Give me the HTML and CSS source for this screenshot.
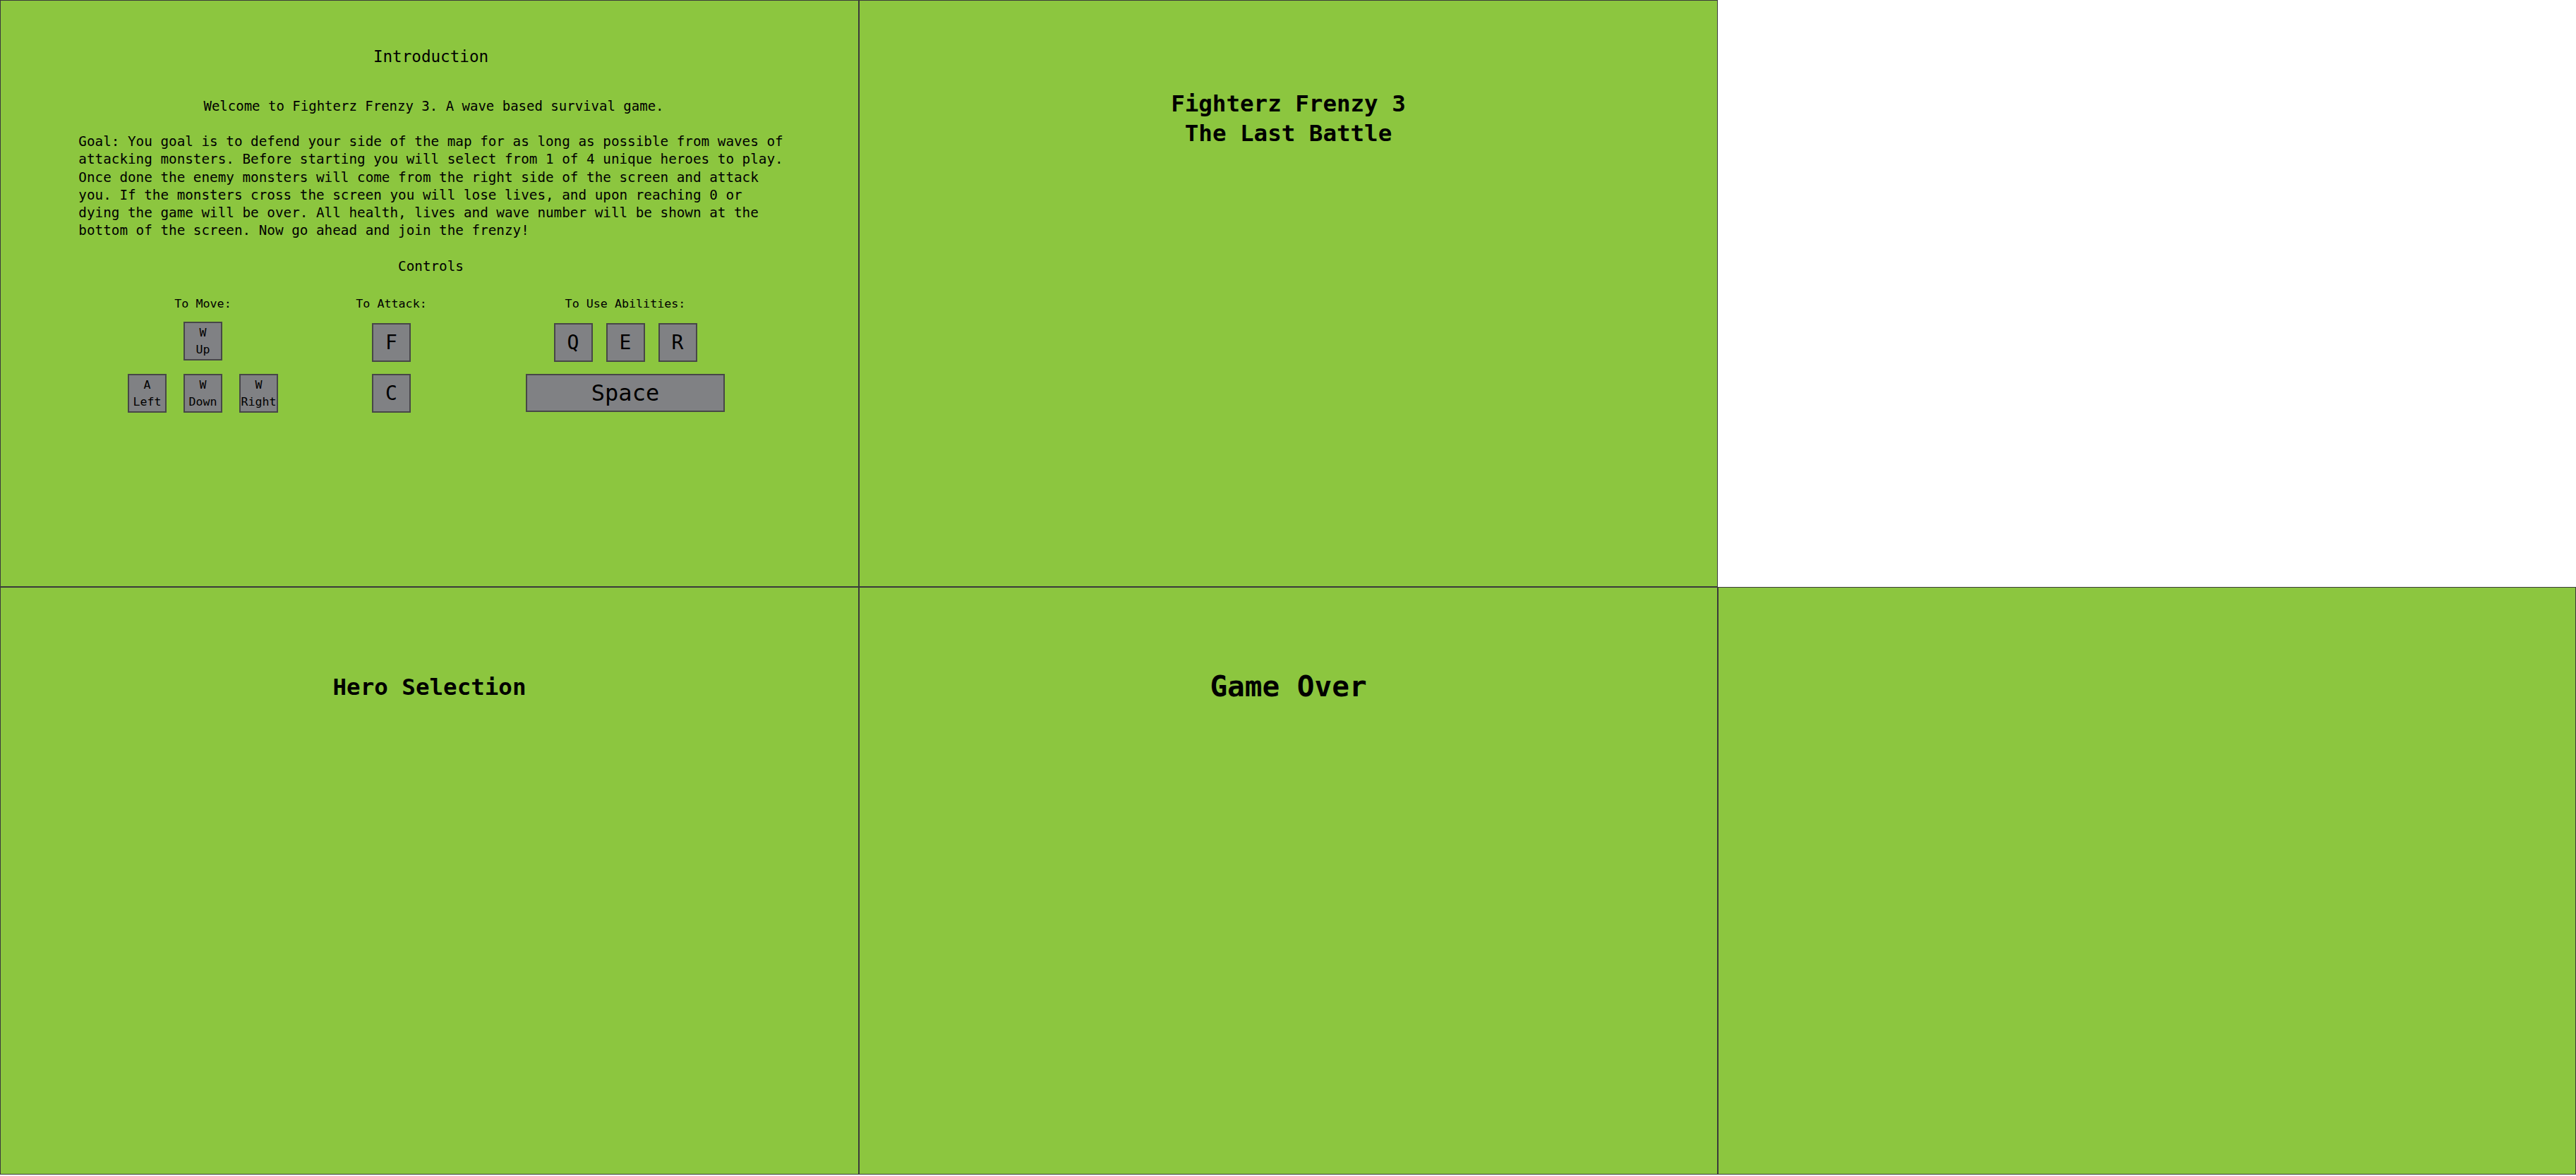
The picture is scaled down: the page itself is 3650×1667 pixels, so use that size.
FILE: index.html
```html
<!DOCTYPE html>
<html lang="en">
<head>
<meta charset="utf-8">
<title>Fighterz Frenzy 3 - Screens</title>
<link rel="stylesheet" href="styles.css">
</head>
<body>
<div class="board">
  <section class="panel intro">
    <h2 class="intro-title">Introduction</h2>
    <p class="welcome">Welcome to Fighterz Frenzy 3. A wave based survival game.</p>
    <p class="goal">Goal: You goal is to defend your side of the map for as long as possible from waves of attacking monsters. Before starting you will select from 1 of 4 unique heroes to play. Once done the enemy monsters will come from the right side of the screen and attack you. If the monsters cross the screen you will lose lives, and upon reaching 0 or dying the game will be over. All health, lives and wave number will be shown at the bottom of the screen. Now go ahead and join the frenzy!</p>
    <h3 class="controls-title">Controls</h3>
    <div class="controls">
      <div class="ctrl move">
        <div class="ctrl-label">To Move:</div>
        <div class="move-grid">
          <div class="key small up"><span>W</span><span>Up</span></div>
          <div class="key small low"><span>A</span><span>Left</span></div>
          <div class="key small low"><span>W</span><span>Down</span></div>
          <div class="key small low"><span>W</span><span>Right</span></div>
        </div>
      </div>
      <div class="ctrl attack">
        <div class="ctrl-label">To Attack:</div>
        <div class="key big">F</div>
        <div class="key big">C</div>
      </div>
      <div class="ctrl abilities">
        <div class="ctrl-label">To Use Abilities:</div>
        <div class="ability-row">
          <div class="key big">Q</div>
          <div class="key big">E</div>
          <div class="key big">R</div>
        </div>
        <div class="key space">Space</div>
      </div>
    </div>
  </section>
  <section class="panel title-screen">
    <h1 class="game-title">Fighterz Frenzy 3<br>The Last Battle</h1>
  </section>
  <div class="empty"></div>
  <section class="panel hero">
    <h2 class="screen-title">Hero Selection</h2>
  </section>
  <section class="panel over">
    <h2 class="over-title">Game Over</h2>
  </section>
  <section class="panel blank"></section>
</div>
</body>
</html>
```
FILE: styles.css
```css
* { box-sizing: border-box; }
html, body { margin: 0; padding: 0; background: #ffffff; }
body {
  font-family: "DejaVu Sans Mono", "Liberation Mono", monospace;
  color: #000;
}
.board {
  display: grid;
  grid-template-columns: 1217px 1217px 1216px;
  grid-template-rows: 832px 833px;
  width: 3650px;
}
.panel {
  background: #8cc63f;
  border: 1px solid #3a3a3a;
}
.empty { background: #fff; }

/* Introduction */
.intro { padding-top: 65px; padding-left: 4px; text-align: center; }
.intro-title {
  margin: 0;
  font-weight: normal;
  font-size: 22.6px;
  line-height: 28px;
}
.welcome {
  margin: 44px 0 0;
  padding-left: 8px;
  font-size: 19px;
  line-height: 25.2px;
}
.goal {
  width: 86ch;
  margin: 25px auto 0;
  text-align: left;
  font-size: 19.3px;
  line-height: 25.2px;
}
.controls-title {
  margin: 26px 0 0;
  font-weight: normal;
  font-size: 19.3px;
  line-height: 25px;
}
.controls {
  display: flex;
  align-items: flex-start;
  margin-top: 30px;
  padding-left: 176px;
}
.ctrl {
  display: flex;
  flex-direction: column;
  align-items: center;
}
.ctrl-label {
  font-size: 16.7px;
  line-height: 20px;
  margin-bottom: 18px;
  white-space: nowrap;
}
.move { width: 213px; }
.attack { width: 101px; margin-left: 110px; gap: 17px; }
.attack .ctrl-label { margin-bottom: 1px; }
.abilities { width: 282px; margin-left: 140px; gap: 17px; }
.abilities .ctrl-label { margin-bottom: 1px; }
.move-grid {
  display: grid;
  grid-template-columns: repeat(3, 55px);
  column-gap: 24px;
  row-gap: 19px;
  margin-top: -2px;
}
.move-grid .up { grid-column: 2; grid-row: 1; }
.move-grid .low { grid-row: 2; }
.key {
  width: 55px;
  height: 55px;
  background: #808184;
  border: 2px solid #474747;
  display: flex;
  align-items: center;
  justify-content: center;
}
.key.small {
  flex-direction: column;
  font-size: 16.6px;
  line-height: 24px;
}
.key.big { font-size: 28px; }
.ability-row { display: flex; gap: 19px; }
.key.space {
  width: 282px;
  height: 54px;
  font-size: 32px;
}

/* Title screen */
.title-screen { padding-top: 125px; text-align: center; }
.game-title {
  margin: 0;
  font-weight: bold;
  font-size: 32.5px;
  line-height: 42px;
}

/* Hero selection */
.hero { padding-top: 120px; text-align: center; }
.screen-title {
  margin: 0;
  font-weight: bold;
  font-size: 32.5px;
  line-height: 42px;
}

/* Game over */
.over { padding-top: 115px; text-align: center; }
.over-title {
  margin: 0;
  font-weight: bold;
  font-size: 41px;
  line-height: 50px;
}
```
